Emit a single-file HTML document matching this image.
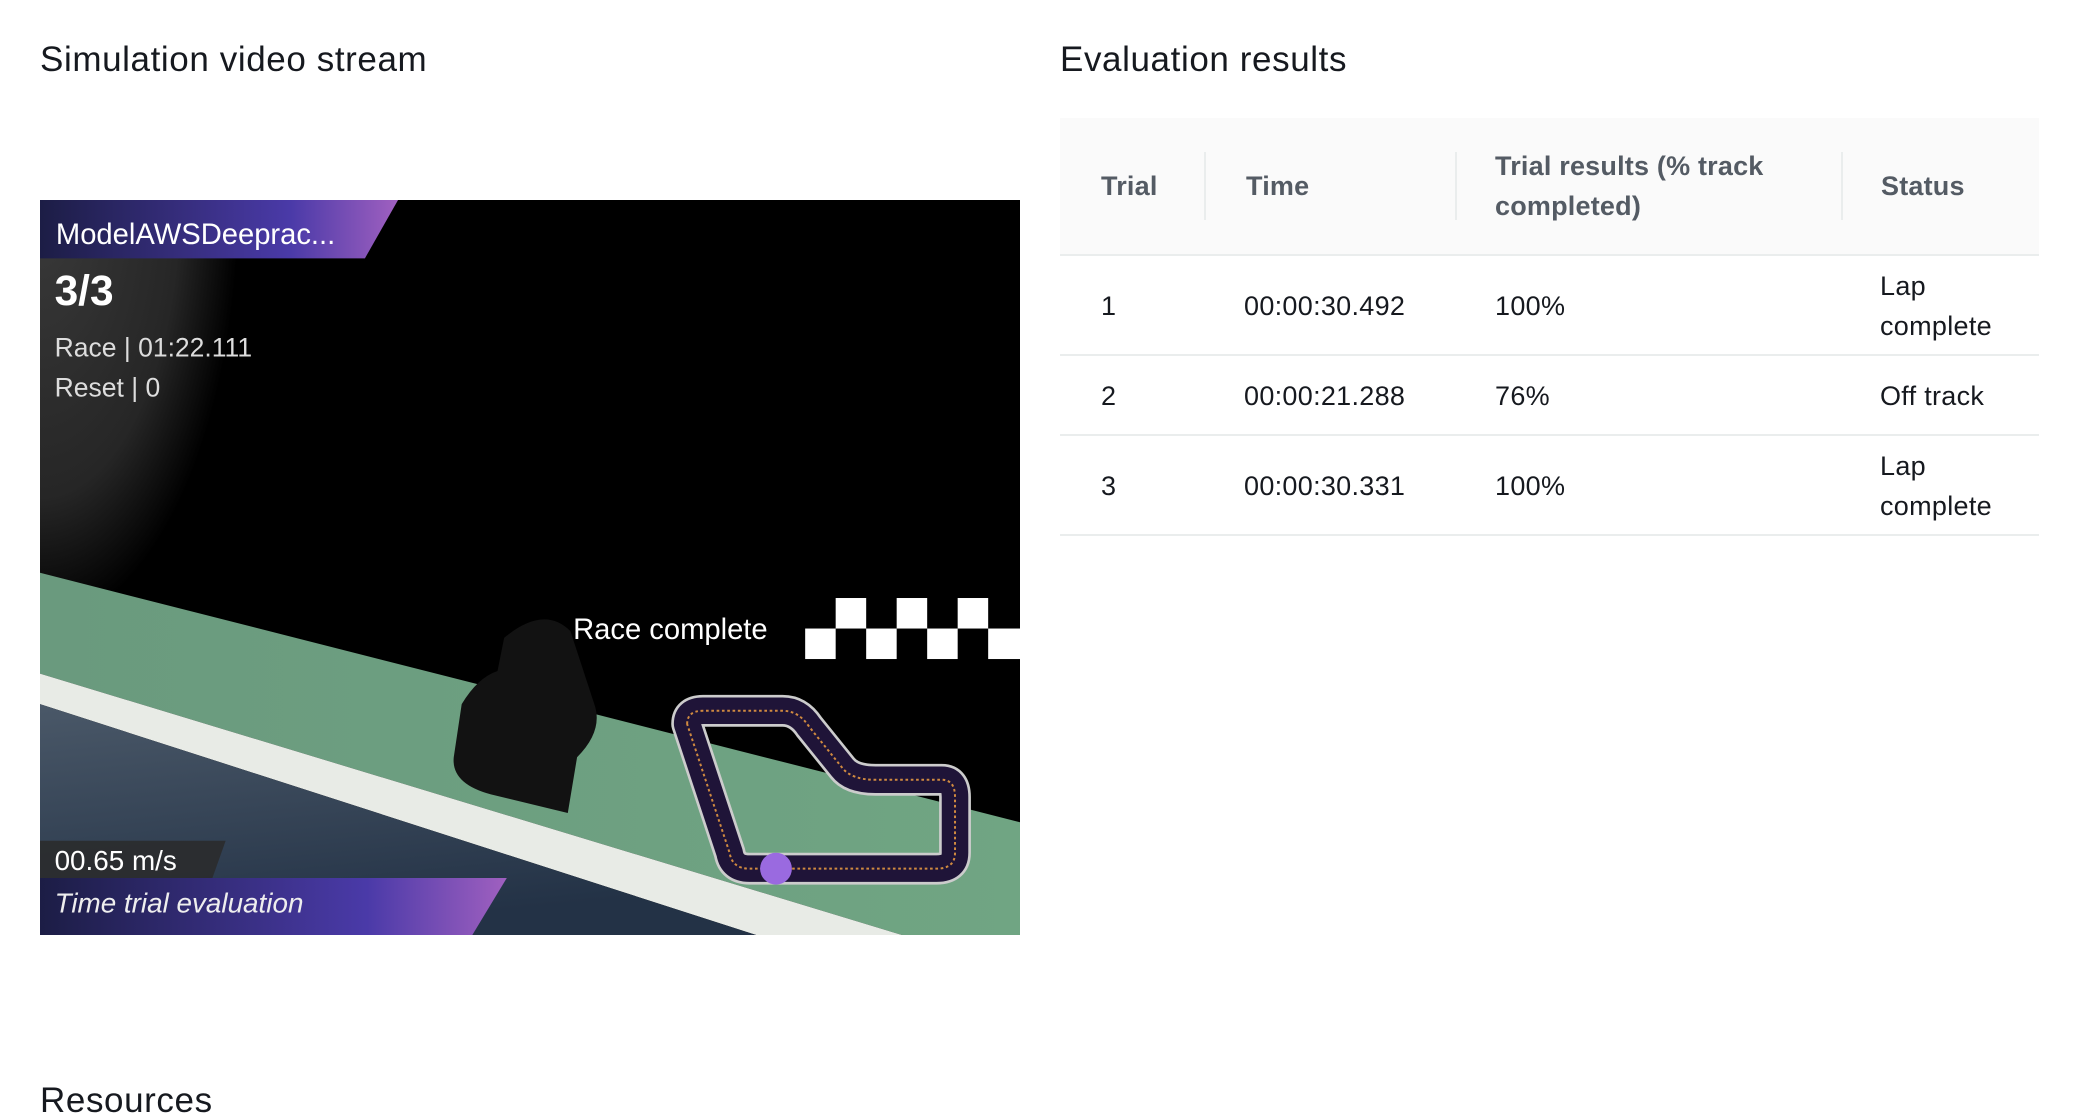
<!DOCTYPE html>
<html><head><meta charset="utf-8"><style>
html,body{margin:0;padding:0;background:#fff;width:2080px;height:1114px;overflow:hidden;font-family:"Liberation Sans",sans-serif;color:#16191f}
.h{position:absolute;font-size:35px;line-height:1;white-space:nowrap;letter-spacing:0.6px}
.t{position:absolute;font-size:27px;line-height:40px;white-space:nowrap;letter-spacing:0.3px}
.th{position:absolute;font-size:27px;line-height:40px;font-weight:bold;color:#545b64;letter-spacing:0.2px}
.line{position:absolute;left:1060px;width:979px;height:2px;background:#eaeded}
.sep{position:absolute;top:152px;width:2px;height:68px;background:#eaeded}
</style></head><body>
<div class="h" style="left:40px;top:42px">Simulation video stream</div>
<div class="h" style="left:1060px;top:42px">Evaluation results</div>
<div class="h" style="left:40px;top:1083px">Resources</div>

<div style="position:absolute;left:1060px;top:118px;width:979px;height:137px;background:#fafafa"></div>
<div class="line" style="top:254px"></div>
<div class="line" style="top:354px"></div>
<div class="line" style="top:434px"></div>
<div class="line" style="top:534px"></div>
<div class="sep" style="left:1204px"></div>
<div class="sep" style="left:1455px"></div>
<div class="sep" style="left:1841px"></div>
<div class="th" style="left:1101px;top:166px">Trial</div>
<div class="th" style="left:1246px;top:166px">Time</div>
<div class="th" style="left:1495px;top:146px">Trial results (% track<br>completed)</div>
<div class="th" style="left:1881px;top:166px">Status</div>

<div class="t" style="left:1101px;top:286px">1</div>
<div class="t" style="left:1244px;top:286px">00:00:30.492</div>
<div class="t" style="left:1495px;top:286px">100%</div>
<div class="t" style="left:1880px;top:266px">Lap<br>complete</div>
<div class="t" style="left:1101px;top:376px">2</div>
<div class="t" style="left:1244px;top:376px">00:00:21.288</div>
<div class="t" style="left:1495px;top:376px">76%</div>
<div class="t" style="left:1880px;top:376px">Off track</div>
<div class="t" style="left:1101px;top:466px">3</div>
<div class="t" style="left:1244px;top:466px">00:00:30.331</div>
<div class="t" style="left:1495px;top:466px">100%</div>
<div class="t" style="left:1880px;top:446px">Lap<br>complete</div>

<svg style="position:absolute;left:40px;top:200px" width="980" height="735" viewBox="0 0 739 554" preserveAspectRatio="none">
<defs>
<radialGradient id="vg" cx="0" cy="0" r="1" gradientUnits="userSpaceOnUse" gradientTransform="translate(0,0) scale(150,320)">
<stop offset="0" stop-color="#3a3a3a"/><stop offset="0.7" stop-color="#262626"/><stop offset="1" stop-color="#262626" stop-opacity="0"/></radialGradient>
<linearGradient id="pb" x1="0" x2="1"><stop offset="0" stop-color="#1c1d45"/><stop offset="0.7" stop-color="#4a3aa8"/><stop offset="1" stop-color="#a060c0"/></linearGradient>
<linearGradient id="gr" x1="0" x2="1"><stop offset="0" stop-color="#6a9a7e"/><stop offset="1" stop-color="#70a583"/></linearGradient>
<linearGradient id="bl" x1="0" y1="0" x2="0.3" y2="1"><stop offset="0" stop-color="#4a5868"/><stop offset="1" stop-color="#233246"/></linearGradient>
</defs>
<rect width="739" height="554" fill="#000"/>
<rect x="0" y="0" width="260" height="320" fill="url(#vg)"/>
<polygon points="0,281 739,469 739,554 650,554 0,357" fill="url(#gr)"/>
<polygon points="0,357 650,554 540,554 0,380" fill="#e8ebe6"/>
<polygon points="0,380 540,554 0,554" fill="url(#bl)"/>
<polygon points="0,0 270,0 245,44 0,44" fill="url(#pb)"/>
<text x="12" y="33" fill="#fff" font-size="22" font-family="Liberation Sans">ModelAWSDeeprac...</text>
<text x="11" y="79" fill="#fff" font-size="32" font-weight="bold" font-family="Liberation Sans">3/3</text>
<text x="11" y="118" fill="#ddd" font-size="20" font-family="Liberation Sans">Race | 01:22.111</text>
<text x="11" y="148" fill="#ddd" font-size="20" font-family="Liberation Sans">Reset | 0</text>
<text x="402" y="331" fill="#fff" font-size="22" font-family="Liberation Sans">Race complete</text>
<g fill="#fff">
<rect x="600" y="300" width="23" height="23"/><rect x="646" y="300" width="23" height="23"/><rect x="692" y="300" width="23" height="23"/>
<rect x="577" y="323" width="23" height="23"/><rect x="623" y="323" width="23" height="23"/><rect x="669" y="323" width="23" height="23"/><rect x="715" y="323" width="24" height="23"/>
</g>
<g fill="#121212">
<path d="M350,330 Q380,305 400,325 L418,380 Q425,400 405,420 L398,462 L340,448 Q310,440 312,420 L318,380 Q330,360 345,355 Z"/>
</g>
<g fill="none" stroke-linejoin="round">
<path id="tr" d="M488,395 Q488,385 500,385 L560,385 Q572,385 580,397 L605,428 Q612,437 630,437 L680,437 Q690,437 690,450 L690,492 Q690,504 676,504 L535,504 Q522,504 520,492 Z" stroke="#ccc" stroke-width="24"/>
<path d="M488,395 Q488,385 500,385 L560,385 Q572,385 580,397 L605,428 Q612,437 630,437 L680,437 Q690,437 690,450 L690,492 Q690,504 676,504 L535,504 Q522,504 520,492 Z" stroke="#1f1438" stroke-width="20"/>
<path d="M488,395 Q488,385 500,385 L560,385 Q572,385 580,397 L605,428 Q612,437 630,437 L680,437 Q690,437 690,450 L690,492 Q690,504 676,504 L535,504 Q522,504 520,492 Z" stroke="#d08a40" stroke-width="1.5" stroke-dasharray="2,2"/>
</g>
<circle cx="555" cy="504" r="12" fill="#9a6ae0"/>
<polygon points="0,483 140,483 130,511 0,511" fill="#2a2a2a" opacity="0.85"/>
<polygon points="0,511 352,511 326,554 0,554" fill="url(#pb)"/>
<text x="11" y="505" fill="#fff" font-size="21" font-family="Liberation Sans">00.65 m/s</text>
<text x="11" y="537" fill="#eee" font-size="21" font-style="italic" font-family="Liberation Sans">Time trial evaluation</text>
</svg>
</body></html>
